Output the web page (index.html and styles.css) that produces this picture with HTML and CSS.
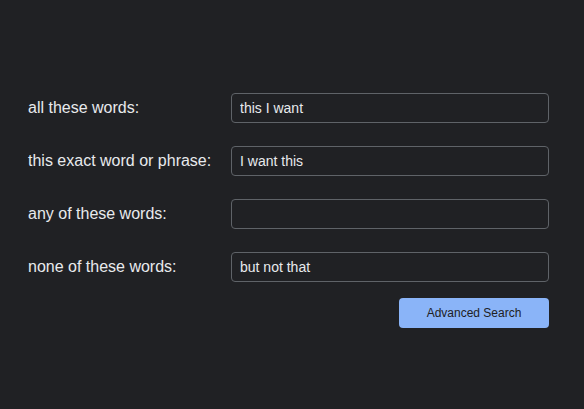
FILE: index.html
```html
<!DOCTYPE html>
<html>
<head>
<meta charset="utf-8">
<link rel="stylesheet" href="styles.css">
</head>
<body>
<form class="adv">
  <div class="grid">
    <label class="lbl" for="a">all these words:</label>
    <input class="field" id="a" type="text" value="this I want">
    <label class="lbl" for="b">this exact word or phrase:</label>
    <input class="field" id="b" type="text" value="I want this">
    <label class="lbl" for="c">any of these words:</label>
    <input class="field" id="c" type="text" value="">
    <label class="lbl" for="d">none of these words:</label>
    <input class="field" id="d" type="text" value="but not that">
  </div>
  <div class="actions">
    <button class="btn" type="button">Advanced Search</button>
  </div>
</form>
</body>
</html>
```
FILE: styles.css
```css
html, body {
  margin: 0;
  background: #202124;
  height: 100%;
}
body {
  font-family: "Liberation Sans", Arial, sans-serif;
  color: #e8eaed;
}
.adv {
  width: 521px;
  padding: 93px 0 0 28px;
}
.grid {
  display: grid;
  grid-template-columns: 203px 318px;
  row-gap: 23px;
  align-items: center;
}
.lbl {
  font-size: 16px;
  color: #e8eaed;
}
.field {
  box-sizing: border-box;
  height: 30px;
  width: 318px;
  margin: 0;
  padding: 0 8px;
  border: 1px solid #5f6368;
  border-radius: 4px;
  background: #202124;
  color: #e8eaed;
  font-family: "Liberation Sans", Arial, sans-serif;
  font-size: 14px;
  outline: none;
}
.actions {
  display: flex;
  justify-content: flex-end;
  margin-top: 16px;
}
.btn {
  box-sizing: border-box;
  width: 150px;
  height: 30px;
  border: none;
  border-radius: 4px;
  background: #8ab4f8;
  color: #202124;
  font-family: "Liberation Sans", Arial, sans-serif;
  font-size: 12px;
  cursor: pointer;
}
```
